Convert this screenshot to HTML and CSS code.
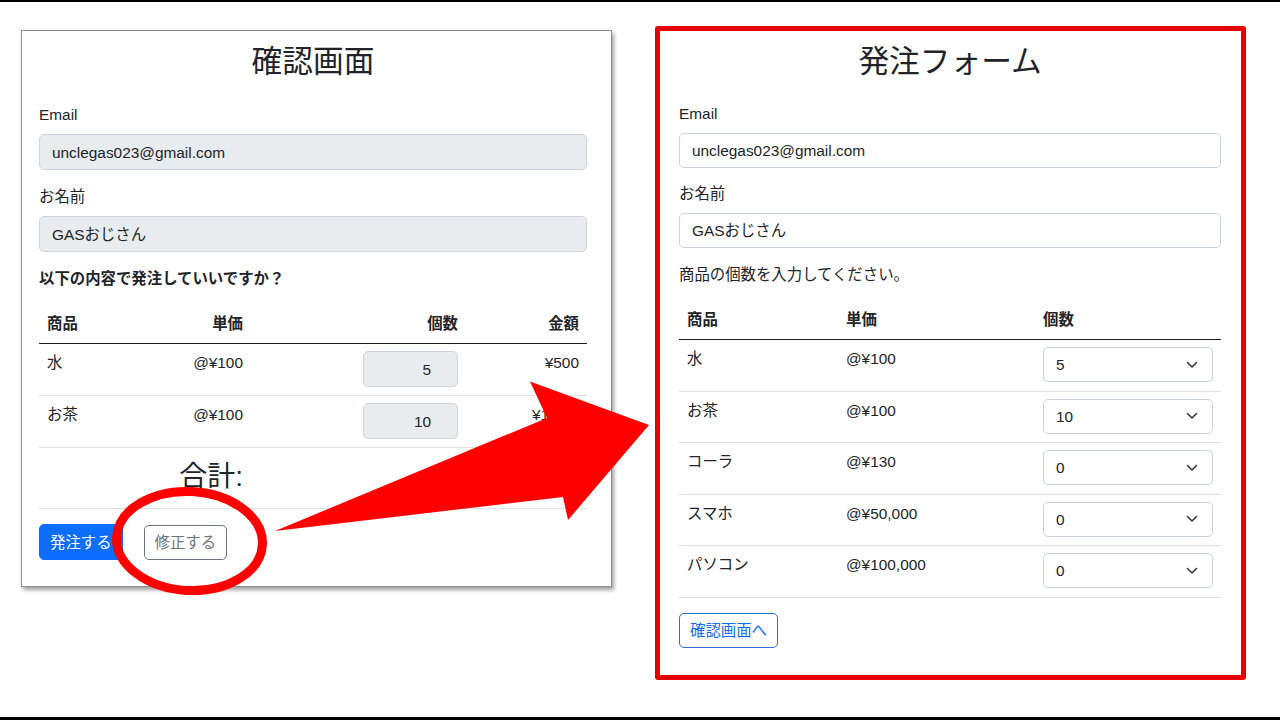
FILE: index.html
```html
<!DOCTYPE html>
<html lang="ja">
<head>
<meta charset="utf-8">
<title>確認画面 / 発注フォーム</title>
<link rel="stylesheet" href="styles.css">
</head>
<body>
<div class="edge edge-top"></div>
<main class="stage">
  <section class="card confirm">
    <h2 class="title">確認画面</h2>
    <div class="field">
      <label class="label">Email</label>
      <div class="input disabled">unclegas023@gmail.com</div>
    </div>
    <div class="field">
      <label class="label">お名前</label>
      <div class="input disabled">GASおじさん</div>
    </div>
    <p class="question">以下の内容で発注していいですか？</p>
    <table class="table confirm-table">
      <colgroup><col class="c1"><col class="c2"><col class="c3"><col class="c4"></colgroup>
      <thead>
        <tr><th class="left">商品</th><th class="right">単価</th><th class="right">個数</th><th class="right">金額</th></tr>
      </thead>
      <tbody>
        <tr><td>水</td><td class="right">@¥100</td><td><div class="qty">5</div></td><td class="right">¥500</td></tr>
        <tr><td>お茶</td><td class="right">@¥100</td><td><div class="qty">10</div></td><td class="right">¥1,000</td></tr>
        <tr class="total"><td colspan="2" class="right">合計:</td><td></td><td class="right">¥1,500</td></tr>
      </tbody>
    </table>
    <div class="actions">
      <button class="btn btn-primary">発注する</button>
      <button class="btn btn-outline-secondary">修正する</button>
    </div>
  </section>

  <section class="card order">
    <h2 class="title">発注フォーム</h2>
    <div class="field">
      <label class="label">Email</label>
      <div class="input">unclegas023@gmail.com</div>
    </div>
    <div class="field">
      <label class="label">お名前</label>
      <div class="input">GASおじさん</div>
    </div>
    <p class="hint">商品の個数を入力してください。</p>
    <table class="table order-table">
      <colgroup><col class="o1"><col class="o2"><col class="o3"></colgroup>
      <thead>
        <tr><th class="left">商品</th><th class="left">単価</th><th class="left">個数</th></tr>
      </thead>
      <tbody>
        <tr><td>水</td><td>@¥100</td><td><div class="select"><span>5</span><svg class="chev" viewBox="0 0 12 8" width="12" height="8"><path d="M1.5 1.5 L6 6 L10.5 1.5"/></svg></div></td></tr>
        <tr><td>お茶</td><td>@¥100</td><td><div class="select"><span>10</span><svg class="chev" viewBox="0 0 12 8" width="12" height="8"><path d="M1.5 1.5 L6 6 L10.5 1.5"/></svg></div></td></tr>
        <tr><td>コーラ</td><td>@¥130</td><td><div class="select"><span>0</span><svg class="chev" viewBox="0 0 12 8" width="12" height="8"><path d="M1.5 1.5 L6 6 L10.5 1.5"/></svg></div></td></tr>
        <tr><td>スマホ</td><td>@¥50,000</td><td><div class="select"><span>0</span><svg class="chev" viewBox="0 0 12 8" width="12" height="8"><path d="M1.5 1.5 L6 6 L10.5 1.5"/></svg></div></td></tr>
        <tr><td>パソコン</td><td>@¥100,000</td><td><div class="select"><span>0</span><svg class="chev" viewBox="0 0 12 8" width="12" height="8"><path d="M1.5 1.5 L6 6 L10.5 1.5"/></svg></div></td></tr>
      </tbody>
    </table>
    <div class="actions">
      <button class="btn btn-outline-primary">確認画面へ</button>
    </div>
  </section>
</main>
<div class="edge edge-bottom"></div>

<svg class="overlay" viewBox="0 0 1280 720" width="1280" height="720" aria-hidden="true">
  <polygon class="arrow" points="275,531 547,418 530,381.5 649,425 568,520 563,497"/>
  <ellipse class="ring" cx="189.5" cy="541" rx="73" ry="49.5" transform="rotate(3 189.5 541)"/>
</svg>
</body>
</html>
```

FILE: styles.css
```css
* { box-sizing: border-box; }

html, body {
  margin: 0;
  padding: 0;
  background: #fff;
}

body {
  width: 1280px;
  height: 720px;
  overflow: hidden;
  position: relative;
  font-family: "Liberation Sans", "Noto Sans CJK JP", sans-serif;
  font-size: 15.4px;
  line-height: 23px;
  color: #212529;
}

.edge { background: #000; width: 100%; }
.edge-top { height: 2px; }
.edge-bottom { height: 3px; }

.stage {
  height: 715px;
  display: flex;
  align-items: flex-start;
  padding-left: 21px;
  gap: 43px;
}

.card {
  width: 591px;
  background: #fff;
}

.confirm {
  margin-top: 28px;
  border: 1px solid #8e8e8e;
  box-shadow: 2px 3px 4px rgba(0, 0, 0, 0.38);
  padding: 12px 24px 26px 17px;
}

.order {
  margin-top: 24px;
  border: 5px solid #e60000;
  border-radius: 3px;
  padding: 12px 20px 27px 19px;
}

.title {
  margin: 0 0 23px;
  font-size: 30.7px;
  line-height: 37px;
  font-weight: 400;
  text-align: center;
  color: #212529;
}
.order .title { margin-bottom: 22px; }

.field { margin-bottom: 15px; }
.order .field:first-of-type { margin-bottom: 14px; }

.label {
  display: block;
  margin-bottom: 8px;
}

.input {
  height: 36px;
  padding: 0 12px;
  border: 1px solid #ced4da;
  border-radius: 5px;
  display: flex;
  align-items: center;
  background: #fff;
  color: #212529;
}
.order .input { height: 35px; }
.input.disabled { background: #e9ecef; }

.question {
  margin: 0 0 14px;
  font-weight: 700;
}
.hint {
  margin: 0 0 14px;
}

.table {
  width: 100%;
  border-collapse: collapse;
  table-layout: fixed;
  margin-bottom: 15px;
}
.c1 { width: 111px; }
.c2 { width: 101px; }
.c3 { width: 215px; }
.c4 { width: 121px; }
.o1 { width: 159px; }
.o2 { width: 197px; }
.o3 { width: 186px; }

.table th {
  font-weight: 700;
  padding: 8px;
  border-bottom: 1px solid #1d1d1d;
  vertical-align: bottom;
}
.table td {
  padding: 7px 8px 8px;
  border-bottom: 1px solid #dee2e6;
  vertical-align: top;
  white-space: nowrap;
}
.order-table td { padding-bottom: 8.5px; }

.left { text-align: left; }
.right { text-align: right; }

.qty {
  width: 95px;
  height: 36px;
  margin-left: auto;
  padding-right: 26px;
  background: #e9ecef;
  border: 1px solid #ced4da;
  border-radius: 5px;
  display: flex;
  align-items: center;
  justify-content: flex-end;
}

.total td {
  font-size: 28px;
  line-height: 34px;
  padding: 12px 8px 14px;
}

.select {
  width: 170px;
  height: 35px;
  border: 1px solid #ced4da;
  border-radius: 5px;
  display: flex;
  align-items: center;
  justify-content: space-between;
  padding: 0 14px 0 12px;
  background: #fff;
}
.chev {
  display: block;
  fill: none;
  stroke: #343a40;
  stroke-width: 1.6;
  stroke-linecap: round;
  stroke-linejoin: round;
}

.actions {
  display: flex;
  align-items: center;
  gap: 21px;
}

.btn {
  font-family: inherit;
  font-size: 15.4px;
  line-height: 23px;
  height: 36px;
  padding: 0 10px;
  border-radius: 5px;
  border: 1px solid transparent;
  background: #fff;
  cursor: pointer;
}
.btn-primary {
  background: #0d6efd;
  border-color: #0d6efd;
  color: #fff;
}
.btn-outline-secondary {
  height: 35px;
  margin-top: 1px;
  border-color: #6c757d;
  color: #6c757d;
}
.btn-outline-primary {
  height: 35px;
  border-color: #2f6fd0;
  color: #0d6efd;
}

.overlay {
  position: absolute;
  left: 0;
  top: 0;
  pointer-events: none;
}
.arrow { fill: #ff0000; }
.ring {
  fill: none;
  stroke: #ff0000;
  stroke-width: 9;
}
```
